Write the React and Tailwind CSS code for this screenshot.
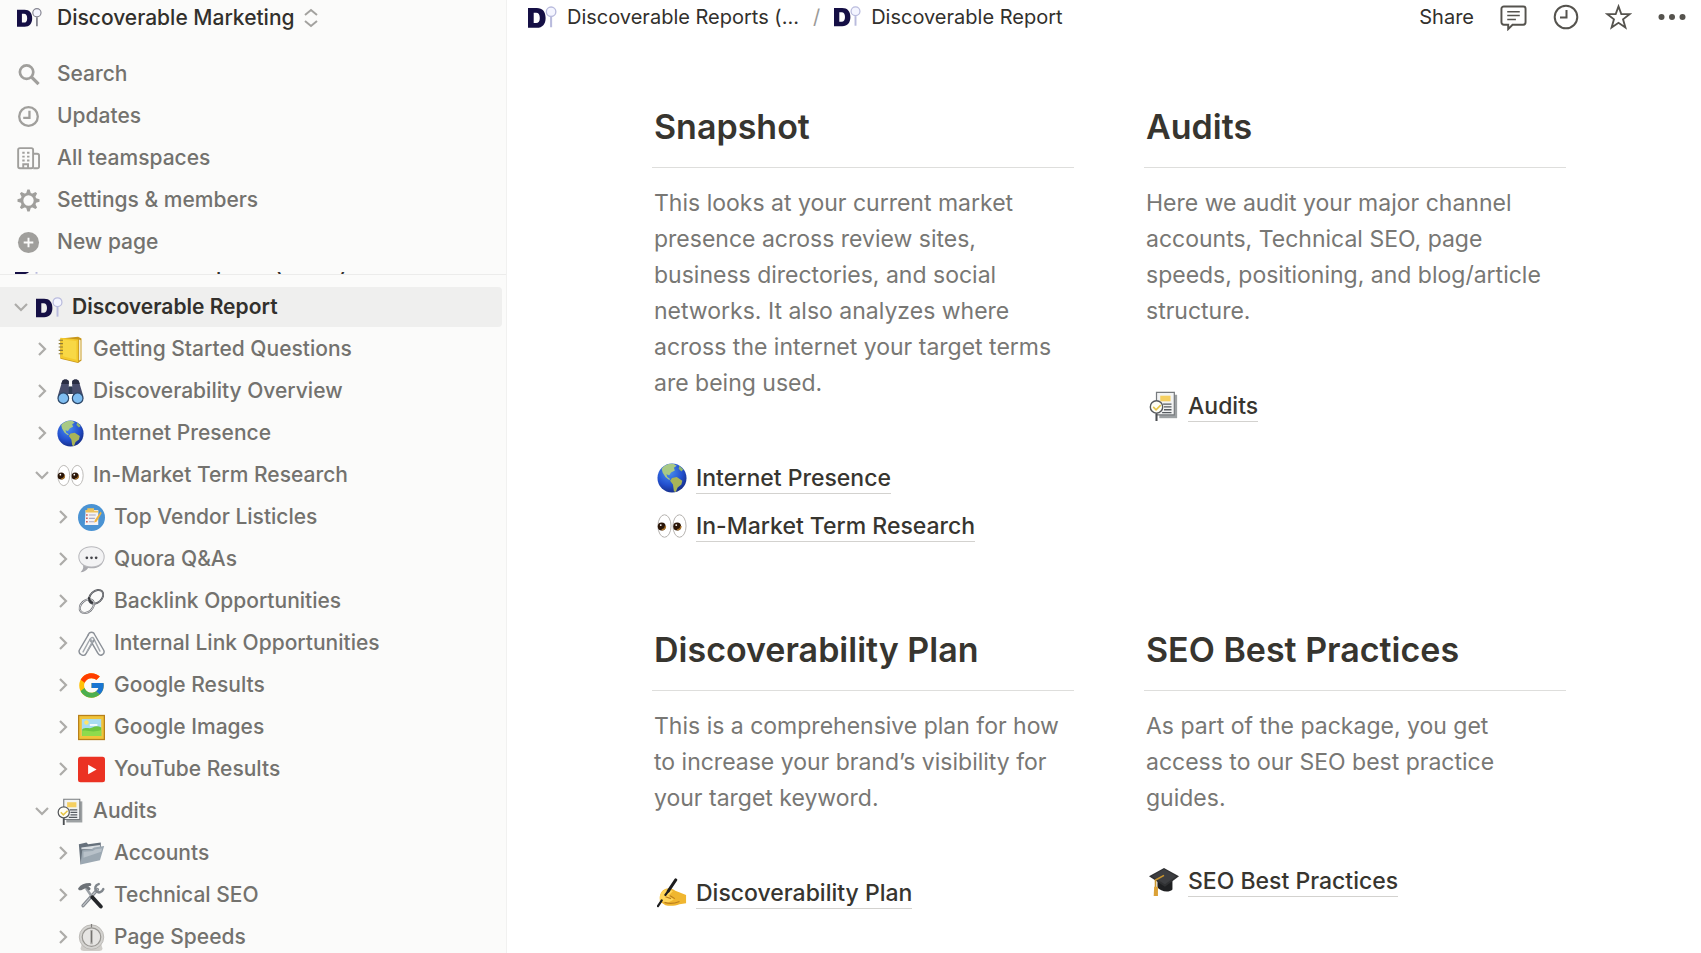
import React from "react";
import { FcGoogle } from "react-icons/fc";

function Logo({ className, pin = "#b9bbdd" }) {
  return (
    <svg viewBox="0 0 28 24" className={className} aria-hidden="true">
      <path
        fillRule="evenodd"
        fill="#150f45"
        d="M0 3h8.5C14 3 17 6.500 17 12.500S14 22 8.500 22H0zM5.500 7.500v10h2.300c2.400 0 3.600-1.700 3.600-5s-1.200-5-3.600-5z"
      />
      <circle cx="22.300" cy="6.500" r="4.600" fill="#f4f5ff" stroke={pin} strokeWidth="1.300" />
      <path d="M22.300 11.500V21.500" stroke={pin} strokeWidth="2" />
    </svg>
  );
}

function Chevron({ open }) {
  return (
    <svg viewBox="0 0 16 16" className="size-4" fill="none" stroke="#adaca9" strokeWidth="2.200" aria-hidden="true">
      <path d={open ? "M2 5l6 6 6-6" : "M5 2l6 6-6 6"} />
    </svg>
  );
}

const emoji = {
  notebook: (
    <>
      <path d="M4 3L25 1l4 2v26l-4 3L4 27z" fill="#c8971b" />
      <path d="M26 4l2 1v23l-2 1z" fill="#f3ecd0" />
      <path d="M4 2l21 2v27L4 26z" fill="#f3c92c" />
      <path d="M7 4l16 2v22L7 24z" fill="#f8d845" />
      <path d="M2 5h5M2 9h5M2 13h5M2 17h5M2 21h5" stroke="#8c7a35" strokeWidth="1.300" />
    </>
  ),
  binoculars: (
    <>
      <path d="M6 4c1-3 7-3 8 0v7h4V4c1-3 7-3 8 0l5 17v4H19v-6h-6v6H1v-4z" fill="#484d6b" />
      <path d="M6 4c1-3 7-3 8 0v3H5zM18 4c1-3 7-3 8 0l1 3h-9z" fill="#292d42" />
      <path d="M14 10h4v9h-4z" fill="#2f3b52" />
      <circle cx="7.500" cy="24" r="6.300" fill="#7fbdf0" stroke="#2c4768" strokeWidth="1.400" />
      <circle cx="24.500" cy="24" r="6.300" fill="#7fbdf0" stroke="#2c4768" strokeWidth="1.400" />
    </>
  ),
  globe: (
    <>
      <defs>
        <radialGradient id="ocean" cx="0.4" cy="0.3" r="0.75">
          <stop offset="0" stopColor="#4a90f0" />
          <stop offset="0.6" stopColor="#2350cf" />
          <stop offset="1" stopColor="#152a80" />
        </radialGradient>
      </defs>
      <circle cx="16" cy="16" r="15.500" fill="url(#ocean)" />
      <path d="M5 6c3-4 8-6 13-5l3 2-3 2 1 3-4 2-2 3-3-1 1 3 3 2-1 1-4-3-3-5z" fill="#a8c985" />
      <path d="M24 3l4 4-2 2-3-3z" fill="#8db56c" />
      <path d="M16 16l5-1 6 4-1 4-4 3-2 5-2-1-1-7-3-4z" fill="#a9b458" />
    </>
  ),
  eyes: (
    <>
      <ellipse cx="8" cy="16" rx="7" ry="12" fill="#fff" stroke="#b1aeab" />
      <ellipse cx="24" cy="16" rx="7" ry="12" fill="#fff" stroke="#b1aeab" />
      <circle cx="5" cy="16.500" r="4.200" fill="#2a1507" />
      <circle cx="21.500" cy="16.500" r="4.200" fill="#2a1507" />
      <path d="M5 20c2.500 0 4-1.500 4-4M21.500 20c2.500 0 4-1.500 4-4" stroke="#a8732c" strokeWidth="1.500" fill="none" />
      <circle cx="4" cy="15" r="1" fill="#fff" />
      <circle cx="20.500" cy="15" r="1" fill="#fff" />
    </>
  ),
  listicle: (
    <>
      <circle cx="16" cy="16" r="16" fill="#4a93d3" />
      <path d="M9 7h15v18H8z" fill="#f5f3f5" />
      <path d="M11 5h8v3h5v2H9V7h2z" fill="#edc25c" />
      <path d="M13 13h8M13 17h7M13 21h6" stroke="#aaa9c4" strokeWidth="1.300" />
      <path d="M9.500 13h2M9.500 17h2M9.500 21h2" stroke="#ce6059" strokeWidth="1.800" />
      <path d="M27 9l-7 10-1 3 3-1 6-10z" fill="#efb340" />
    </>
  ),
  speech: (
    <>
      <path d="M4 20c6 7 22 7 26-4 0 8-9 12-18 10-2 3-5 5-9 5 2-2 4-5 3-8z" fill="#a9a9ae" />
      <path d="M16 1C7 1 1 6 1 13s6 12 15 12 15-5 15-12S25 1 16 1z" fill="#f3f3f4" stroke="#b8b8bc" strokeWidth="1.200" />
      <circle cx="10.500" cy="14" r="1.600" fill="#44444a" />
      <circle cx="16" cy="14" r="1.600" fill="#44444a" />
      <circle cx="21.500" cy="14" r="1.600" fill="#44444a" />
    </>
  ),
  link: (
    <g fill="none">
      <ellipse cx="21.500" cy="10.500" rx="9.600" ry="6.800" transform="rotate(-42 21.500 10.500)" stroke="#4b4d52" strokeWidth="2.200" />
      <ellipse cx="21.500" cy="10.500" rx="9.600" ry="6.800" transform="rotate(-42 21.500 10.500)" stroke="#b9bbbe" strokeWidth="0.600" />
      <ellipse cx="10.500" cy="21.500" rx="9.600" ry="6.800" transform="rotate(-42 10.500 21.500)" stroke="#6c6e73" strokeWidth="2.400" />
      <ellipse cx="10.500" cy="21.500" rx="9.600" ry="6.800" transform="rotate(-42 10.500 21.500)" stroke="#e6e7e9" strokeWidth="0.900" />
      <path d="M13 11c0 3 1.500 5.500 4.500 7" stroke="#37393d" strokeWidth="2.600" />
    </g>
  ),
  clips: (
    <g fill="none" stroke="#8b9097" strokeWidth="1.700" strokeLinecap="round">
      <path d="M12 6c1.500-4.500 6.500-4.500 8 0l10.500 18c2 5-4.500 8-7 3.500L14 11" />
      <path d="M26 25L18.500 10c-1-2-4-1-3.500 1" stroke="#a3a8ae" />
      <path d="M19 12L9.500 28C7.500 32 0 29.500 1.500 24L12 6" />
      <path d="M6 26l7-13c1-2 4-1.500 4 1L11 25" stroke="#a3a8ae" />
    </g>
  ),
  picture: (
    <>
      <path d="M0 1h32v30H0z" fill="#b8801a" />
      <path d="M1.500 2.500h29v27h-29z" fill="#f0c43a" />
      <path d="M4.500 6h23v20h-23z" fill="#a8dcf2" />
      <path d="M5 18c5-3 8 0 12-2s7-2 10.500 0v10H5z" fill="#6cc63f" />
      <path d="M5 20c7-2 10 3 22.500-1v7H5z" fill="#8edb4c" />
      <circle cx="10" cy="10" r="2.600" fill="#fce56b" />
      <path d="M14 12h9v2h-9z" fill="#fff" />
    </>
  ),
  youtube: (
    <>
      <rect x="0" y="1" width="32" height="30" rx="3" fill="#eb3223" />
      <path d="M12 10.500v11l10-5.500z" fill="#fff" />
    </>
  ),
  audit: (
    <>
      <path d="M11 4h19v25H11z" fill="#9da1a3" />
      <path d="M8 1.500h19v24H8z" fill="#f2f3f3" stroke="#777b7e" strokeWidth="1.300" />
      <path d="M12 5h11v6H12z" fill="#f5cf61" />
      <path d="M15 14h9M16 17h8M16 20h8M14 23h10" stroke="#565b60" strokeWidth="1.400" />
      <circle cx="8" cy="17" r="6.600" fill="#fffef5" stroke="#56595d" strokeWidth="1.500" />
      <path d="M4.500 17l3 3 5-5" stroke="#e6c548" strokeWidth="1.700" fill="none" />
      <path d="M8 24v8" stroke="#4c4f52" strokeWidth="2.200" />
    </>
  ),
  folder: (
    <>
      <path d="M1 5l9-2 2 2 15-2v7L3 29z" fill="#66717c" />
      <path d="M4 9l22-3v5H4z" fill="#d8dde1" />
      <path d="M5 12l11-1 3-2 12-2-5 17-23 5z" fill="#9ca8b2" />
      <path d="M6.500 14l11-1 3-2 8-1-1 4-21 7z" fill="#b8c1c9" />
    </>
  ),
  tools: (
    <g fill="none" strokeLinecap="round">
      <path d="M23 9L6 28" stroke="#868b91" strokeWidth="4" />
      <path d="M23 9L6 28" stroke="#c2c6ca" strokeWidth="1.200" />
      <path d="M24.500 2.500c-4 1-5 5-3 8s7 2 8.500-2" stroke="#80868c" strokeWidth="3" />
      <path d="M10 8l7 10" stroke="#9a9fa4" strokeWidth="3" />
      <path d="M17 18l10 11" stroke="#25272a" strokeWidth="4.600" />
      <path d="M2 8c2-3 6-5 12-5M3 8l7-3 3 3" stroke="#6d7277" strokeWidth="3.600" />
    </g>
  ),
  dial: (
    <>
      <path d="M5 22h22l2 7c0 2-2 3-4 3H7c-2 0-4-1-4-3z" fill="#cfcdc9" />
      <circle cx="16" cy="15.500" r="14.500" fill="#d4d3d0" stroke="#b5b3af" />
      <circle cx="16" cy="15.500" r="11" fill="#e6e5e3" stroke="#989692" strokeWidth="1.400" />
      <path d="M14.500 7h3v17h-3z" fill="#b0aeaa" />
      <path d="M16 8v14" stroke="#757370" strokeWidth="1.200" />
      <path d="M16 0v4" stroke="#807e7b" strokeWidth="1.400" />
    </>
  ),
  writing: (
    <>
      <path d="M3 20c1-6 5-9 10-9 4 0 6 3 10 4l8 3v9l-7 1c-5 2-11 2-15 1l-6-4z" fill="#f0b630" />
      <path d="M3 20c1-6 6-9 11-8l3 2-5 5 6 4-6 3-7-1-2-3z" fill="#ffd65a" />
      <path d="M9 20l6 2M8 26c6 2 11 1 16-1M14 19l5 3" stroke="#bb7e1c" strokeWidth="1.200" fill="none" />
      <path d="M20 2l-8 12" stroke="#1d1d1f" strokeWidth="3.200" strokeLinecap="round" />
      <path d="M12 14l-3 4M5 24l-4 6" stroke="#1d1d1f" strokeWidth="2.400" strokeLinecap="round" />
    </>
  ),
  cap: (
    <>
      <path d="M9 14v9c3 4 12 6 16 2V13z" fill="#1f2022" />
      <path d="M16 2l16 9-15 11L0 11z" fill="#303133" />
      <path d="M16 3.500l13 7.500-12 8.500L3 11z" fill="#3d3e41" />
      <path d="M16 10L7 15v8" stroke="#c9952e" strokeWidth="1.800" fill="none" />
      <path d="M5.500 22h4v10H5z" fill="#dba136" />
    </>
  ),
};

function Emoji({ name, className = "size-[27px]" }) {
  if (name === "logo") return <Logo className={className} />;
  if (name === "google") return <FcGoogle viewBox="2 2 44 44" className={className} aria-hidden="true" />;
  return (
    <svg viewBox="0 0 32 32" className={className} aria-hidden="true">
      {emoji[name]}
    </svg>
  );
}

const gearTeeth = [0, 45, 90, 135, 180, 225, 270, 315];

const menu = [
  {
    label: "Search",
    icon: (
      <g fill="none" stroke="currentColor" strokeWidth="2.800">
        <circle cx="10" cy="9.500" r="7" />
        <path d="M15 14.500l7.500 7.500" strokeWidth="3.400" />
      </g>
    ),
  },
  {
    label: "Updates",
    icon: (
      <g fill="none" stroke="currentColor" strokeWidth="2.400">
        <circle cx="12" cy="12" r="9.700" />
        <path d="M13 6v7.500H6.500" />
      </g>
    ),
  },
  {
    label: "All teamspaces",
    icon: (
      <g fill="none" stroke="currentColor" strokeWidth="2">
        <rect x="1.200" y="1.200" width="15.600" height="21" rx="1.800" />
        <path d="M17 7h4a2 2 0 0 1 2 2v11.500a1.700 1.700 0 0 1-1.700 1.700H17M6.500 22v-4h5v4" />
        <path d="M5.500 6h2.500M10.500 6H13M5.500 10h2.500M10.500 10H13M5.500 14h2.500M10.500 14H13" />
      </g>
    ),
  },
  {
    label: "Settings & members",
    icon: (
      <g fill="none" stroke="currentColor">
        <circle cx="12" cy="12" r="6.800" strokeWidth="2.800" />
        {gearTeeth.map((a) => (
          <path key={a} d="M12 6l-2.600-1L10.800 0.500h2.400l1.400 4.500z" fill="currentColor" stroke="none" transform={`rotate(${a} 12 12)`} />
        ))}
      </g>
    ),
  },
  {
    label: "New page",
    icon: (
      <g>
        <circle cx="12" cy="12" r="11" fill="currentColor" />
        <path d="M12 7v10M7 12h10" stroke="#fbfbfa" strokeWidth="2" />
      </g>
    ),
  },
];

const indent = ["pl-[8px]", "pl-[29px]", "pl-[50px]"];

const tree = [
  { label: "Discoverable Report", icon: "logo", level: 0, open: true, active: true },
  { label: "Getting Started Questions", icon: "notebook", level: 1 },
  { label: "Discoverability Overview", icon: "binoculars", level: 1 },
  { label: "Internet Presence", icon: "globe", level: 1 },
  { label: "In-Market Term Research", icon: "eyes", level: 1, open: true },
  { label: "Top Vendor Listicles", icon: "listicle", level: 2 },
  { label: "Quora Q&As", icon: "speech", level: 2 },
  { label: "Backlink Opportunities", icon: "link", level: 2 },
  { label: "Internal Link Opportunities", icon: "clips", level: 2 },
  { label: "Google Results", icon: "google", level: 2 },
  { label: "Google Images", icon: "picture", level: 2 },
  { label: "YouTube Results", icon: "youtube", level: 2 },
  { label: "Audits", icon: "audit", level: 1, open: true },
  { label: "Accounts", icon: "folder", level: 2 },
  { label: "Technical SEO", icon: "tools", level: 2 },
  { label: "Page Speeds", icon: "dial", level: 2 },
];

function TreeRow({ item }) {
  return (
    <li
      className={`mr-1 flex h-10 shrink-0 items-center rounded-r ${indent[item.level]} ${
        item.active ? "bg-[#efefee] font-semibold text-[#32302c]" : "text-[#73726e]"
      }`}
    >
      <button
        type="button"
        aria-label={`Toggle ${item.label}`}
        aria-expanded={!!item.open}
        className="mr-[2px] flex h-6 w-[26px] items-center justify-center"
      >
        <Chevron open={item.open} />
      </button>
      <a href="#" className="flex items-center gap-[9px] whitespace-nowrap">
        <Emoji name={item.icon} />
        {item.label}
      </a>
    </li>
  );
}

function Sidebar() {
  return (
    <aside className="flex w-[507px] shrink-0 flex-col overflow-hidden border-r border-[#f1f1f0] bg-[#fbfbfa] text-[21px] leading-6 font-medium">
      <button type="button" className="flex h-9 shrink-0 items-center pl-[17px] text-[#32302c]">
        <Logo className="mr-[15px] w-[25px]" pin="#84848f" />
        Discoverable Marketing
        <svg viewBox="0 0 16 20" className="ml-2 h-5 w-4" fill="none" stroke="#a3a29f" strokeWidth="2" aria-hidden="true">
          <path d="M2 7l6-5 6 5M2 13l6 5 6-5" />
        </svg>
      </button>
      <nav className="mt-[17px] shrink-0">
        {menu.map((m) => (
          <a key={m.label} href="#" className="flex h-[42px] items-center gap-[17px] pl-[17px] text-[#73726e]">
            <svg viewBox="0 0 24 24" className="size-[23px] text-[#a09f9c]" aria-hidden="true">
              {m.icon}
            </svg>
            {m.label}
          </a>
        ))}
      </nav>
      <div className="mt-[9px] flex h-[3px] shrink-0 items-end overflow-hidden border-b border-[#ececeb] pl-[15px] text-[#32302c]">
        <a href="#" className="flex h-[18px] items-end gap-3 whitespace-nowrap leading-[18px]">
          <Logo className="-mb-[2px] w-[27px]" />
          Discoverable Reports (Client)
        </a>
      </div>
      <ul className="mt-3 flex min-h-0 flex-col gap-[2px]">
        {tree.map((item) => (
          <TreeRow key={item.label} item={item} />
        ))}
      </ul>
    </aside>
  );
}

function Topbar() {
  return (
    <header className="flex h-[34px] shrink-0 items-center justify-between pr-[15px] pl-[21px] text-[20px] leading-6 text-[#32302c]">
      <nav className="flex items-center whitespace-nowrap">
        <a href="#" className="flex items-center gap-[10px]">
          <Logo className="w-[29px]" />
          Discoverable Reports (...
        </a>
        <span className="px-[14px] text-[#9b9a97]">/</span>
        <a href="#" className="flex items-center gap-[10px]">
          <Logo className="w-[27px]" />
          Discoverable Report
        </a>
      </nav>
      <div className="flex items-center gap-[26px] text-[#55534e]">
        <button type="button" className="text-[#32302c]">Share</button>
        <button type="button" aria-label="Comments">
          <svg viewBox="0 0 28 28" className="size-[27px]" fill="none" stroke="currentColor" strokeWidth="2">
            <path d="M4 2.500h20a2.500 2.500 0 0 1 2.500 2.500v14a2.500 2.500 0 0 1-2.500 2.500H13L8.500 26v-4.500H4A2.500 2.500 0 0 1 1.500 19V5A2.500 2.500 0 0 1 4 2.500z" />
            <path d="M7.500 8h13M7.500 12h13M7.500 16h9" strokeWidth="1.600" />
          </svg>
        </button>
        <button type="button" aria-label="Updates">
          <svg viewBox="0 0 26 26" className="size-[26px]" fill="none" stroke="currentColor" strokeWidth="2">
            <circle cx="13" cy="13" r="11.300" />
            <path d="M13.500 6v7.500H7" />
          </svg>
        </button>
        <button type="button" aria-label="Favorite">
          <svg viewBox="0 0 28 28" className="size-[27px]" fill="none" stroke="currentColor" strokeWidth="1.900">
            <path d="M14 2.500l2.900 8h8.600l-6.800 5.300 2.500 8.700-7.200-5-7.200 5 2.500-8.700-6.800-5.300h8.600z" />
          </svg>
        </button>
        <button type="button" aria-label="More">
          <svg viewBox="0 0 28 28" className="size-7" fill="currentColor">
            <circle cx="3.500" cy="14" r="3" />
            <circle cx="14" cy="14" r="3" />
            <circle cx="24.500" cy="14" r="3" />
          </svg>
        </button>
      </div>
    </header>
  );
}

const sections = [
  {
    title: "Snapshot",
    text: "This looks at your current market presence across review sites, business directories, and social networks. It also analyzes where across the internet your target terms are being used.",
    gap: "mt-[53px]",
    links: [
      { icon: "globe", label: "Internet Presence" },
      { icon: "eyes", label: "In-Market Term Research" },
    ],
  },
  {
    title: "Audits",
    text: "Here we audit your major channel accounts, Technical SEO, page speeds, positioning, and blog/article structure.",
    gap: "mt-[53px]",
    links: [{ icon: "audit", label: "Audits" }],
  },
  {
    title: "Discoverability Plan",
    text: "This is a comprehensive plan for how to increase your brand’s visibility for your target keyword.",
    gap: "mt-[53px]",
    links: [{ icon: "writing", label: "Discoverability Plan" }],
  },
  {
    title: "SEO Best Practices",
    text: "As part of the package, you get access to our SEO best practice guides.",
    gap: "mt-[41px]",
    links: [{ icon: "cap", label: "SEO Best Practices" }],
  },
];

function Section({ title, text, gap, links }) {
  return (
    <section>
      <h2 className="px-[2px] text-[34px] leading-[42px] font-semibold text-[#37352f]">{title}</h2>
      <hr className="mt-[19px] border-[#dededc]" />
      <p className="mt-[17px] px-[2px] text-[23px] leading-9 text-[#787774]">{text}</p>
      <ul className={gap}>
        {links.map((l) => (
          <li key={l.label} className="flex h-12 items-center pl-[5px]">
            <a href="#" className="flex items-center gap-[9px] text-[23px] leading-[30px] font-medium text-[#37352f]">
              <Emoji name={l.icon} className="size-[30px]" />
              <span className="border-b border-[#d3d2cf]">{l.label}</span>
            </a>
          </li>
        ))}
      </ul>
    </section>
  );
}

export default function App() {
  return (
    <div className="flex h-screen overflow-hidden bg-white font-['Inter',sans-serif]">
      <Sidebar />
      <main className="flex min-w-0 flex-1 flex-col overflow-hidden">
        <Topbar />
        <div className="grid grid-cols-2 gap-x-[70px] gap-y-[79px] pt-[72px] pr-[135px] pl-[145px]">
          {sections.map((s) => (
            <Section key={s.title} {...s} />
          ))}
        </div>
      </main>
    </div>
  );
}
